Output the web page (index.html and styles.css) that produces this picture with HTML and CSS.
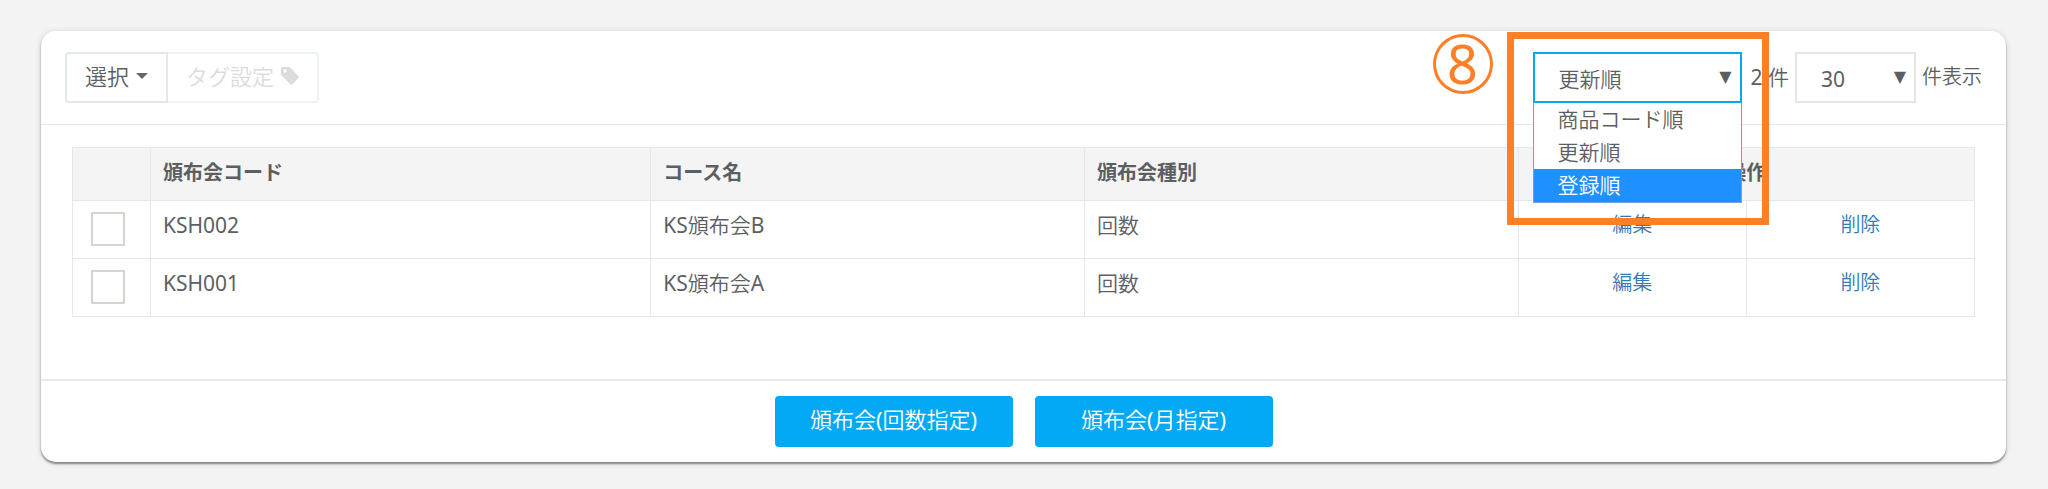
FILE: index.html
```html
<!DOCTYPE html>
<html lang="ja">
<head>
    <meta charset="UTF-8">
    <meta name="viewport" content="width=device-width, initial-scale=1.0">
    <title>頒布会一覧</title>
    <link rel="stylesheet" href="styles.css">
</head>
<body>

    <main class="card">
        <div class="toolbar">
            <div class="btn-group">
                <button type="button" class="btn">選択 <span class="caret"></span></button>
                <button type="button" class="btn" disabled>タグ設定
                    <svg class="tag" viewBox="0 0 18 18" aria-hidden="true">
                        <path fill="currentColor" fill-rule="evenodd" d="M0 1.5Q0 0 1.5 0H7.5Q8.7 0 9.6 .9L17.4 8.9Q18.4 10 17.4 11.1L11.6 17.2Q10.6 18.3 9.4 17.2L.9 9Q0 8.1 0 7ZM4 2.3A1.7 1.7 0 1 0 4 5.7A1.7 1.7 0 1 0 4 2.3Z"/>
                    </svg>
                </button>
            </div>
            <div class="filters">
                <div class="sort">
                    <div class="select sort-select">
                        <select aria-label="並び順">
                            <option>商品コード順</option>
                            <option selected>更新順</option>
                            <option>登録順</option>
                        </select>
                    </div>
                    <ul class="menu">
                        <li>商品コード順</li>
                        <li>更新順</li>
                        <li class="active">登録順</li>
                    </ul>
                    <div class="highlight"></div>
                    <div class="number">8</div>
                </div>
                <span class="count">2 件</span>
                <div class="select">
                    <select id="limit">
                        <option>30</option>
                        <option>50</option>
                        <option>100</option>
                    </select>
                </div>
                <label for="limit">件表示</label>
            </div>
        </div>

        <div class="content">
            <table>
                <colgroup>
                    <col class="col-check">
                    <col class="col-code">
                    <col class="col-name">
                    <col class="col-name">
                    <col class="col-action">
                    <col class="col-action">
                </colgroup>
                <thead>
                    <tr>
                        <th></th>
                        <th>頒布会コード</th>
                        <th>コース名</th>
                        <th>頒布会種別</th>
                        <th colspan="2" class="center">操作</th>
                    </tr>
                </thead>
                <tbody>
                    <tr>
                        <td class="center"><input type="checkbox" aria-label="KSH002"></td>
                        <td>KSH002</td>
                        <td>KS頒布会B</td>
                        <td>回数</td>
                        <td class="center"><a href="#">編集</a></td>
                        <td class="center"><a href="#">削除</a></td>
                    </tr>
                    <tr>
                        <td class="center"><input type="checkbox" aria-label="KSH001"></td>
                        <td>KSH001</td>
                        <td>KS頒布会A</td>
                        <td>回数</td>
                        <td class="center"><a href="#">編集</a></td>
                        <td class="center"><a href="#">削除</a></td>
                    </tr>
                </tbody>
            </table>
        </div>

        <div class="footer">
            <button type="button" class="btn-primary">頒布会(回数指定)</button>
            <button type="button" class="btn-primary">頒布会(月指定)</button>
        </div>
    </main>

</body>
</html>
```
FILE: styles.css
```css
* {
    box-sizing: border-box;
}
body {
    margin: 0;
    padding: 31px 42px 27px 41px;
    background: #f3f3f3;
    color: #5c5f62;
    font-family: "Noto Sans", "Noto Sans CJK JP DemiLight", "Noto Sans CJK JP", sans-serif;
    font-size: 20px;
    line-height: 28px;
}
button, select {
    font: inherit;
    color: inherit;
}
.card {
    background: #fff;
    border-radius: 15px;
    box-shadow: 0 2px 2px rgba(0, 0, 0, 0.4), 0 1px 6px rgba(0, 0, 0, 0.15);
}

/* toolbar */
.toolbar {
    display: flex;
    justify-content: space-between;
    padding: 21px 24px;
    border-bottom: 1px solid #e3e7ea;
}
.btn-group {
    display: flex;
}
.btn {
    display: flex;
    align-items: center;
    gap: 7px;
    padding: 8px 18px 11px;
    border: 2px solid #e3e8eb;
    background: #fff;
    font-size: 22px;
}
.btn:first-child {
    border-radius: 4px 0 0 4px;
}
.btn:last-child {
    border-left: 0;
    border-radius: 0 4px 4px 0;
}
.btn:disabled {
    border-color: #eff2f3;
    color: #dcdcdc;
}
.caret {
    border: 6px solid transparent;
    border-top-color: #636669;
    border-bottom: 0;
}
.tag {
    width: 18px;
    height: 18px;
}
.filters {
    display: flex;
    align-items: center;
    gap: 6px;
}
.count {
    padding-left: 3px;
    font-size: 21px;
}
.count, .filters label {
    padding-bottom: 2px;
}
.select {
    position: relative;
    width: 121px;
}
.select::after {
    content: "▼";
    position: absolute;
    top: 11px;
    right: 10px;
    font-family: "DejaVu Sans", sans-serif;
    font-size: 16px;
    pointer-events: none;
}
.select select {
    display: block;
    width: 100%;
    height: 51px;
    padding: 2px 24px 0;
    border: 2px solid #e5e5e5;
    border-radius: 0;
    background: #fff;
    font-size: 21px;
    appearance: none;
}
.sort {
    position: relative;
}
.sort-select {
    width: 209px;
}
.sort-select select {
    border-color: #03a9f4;
}
.menu {
    position: absolute;
    top: 100%;
    left: 0;
    width: 100%;
    margin: 0;
    padding: 0;
    border: 1px solid #7a9cdd;
    border-top: 0;
    background: #fff;
    font-size: 21px;
    line-height: 33px;
    list-style: none;
}
.menu li {
    padding-left: 24px;
}
.menu .active {
    background: #1e90ff;
    color: #fff;
}
.highlight {
    position: absolute;
    top: -20px;
    left: -26px;
    width: 262px;
    height: 193px;
    border: 7px solid #ff7f27;
    pointer-events: none;
}
.number {
    position: absolute;
    top: -18px;
    left: -100px;
    width: 60px;
    height: 60px;
    border: 3px solid #ff7f27;
    border-radius: 50%;
    color: #ff7f27;
    font-size: 54px;
    line-height: 52px;
    text-align: center;
}

/* table */
.content {
    padding: 22px 31px 62px;
}
table {
    width: 100%;
    border-collapse: collapse;
    table-layout: fixed;
}
.col-check {
    width: 78px;
}
.col-name {
    width: 22.8%;
}
.col-action {
    width: 12%;
}
th, td {
    padding: 10px 12px 12px;
    border: 1px solid #e7e7e7;
    text-align: left;
    vertical-align: top;
}
th {
    padding-bottom: 14px;
    background: #f4f4f4;
    font-family: "Noto Sans CJK JP", sans-serif;
    font-weight: 700;
}
td {
    font-size: 21px;
}
th.center, td.center {
    font-size: 20px;
    text-align: center;
}
a {
    color: #337ab7;
    text-decoration: none;
}
input[type="checkbox"] {
    display: block;
    width: 34px;
    height: 34px;
    margin: 1px 0 0 6px;
    border: 2px solid #d8d3cc;
    background: #fff;
    appearance: none;
}

/* footer */
.footer {
    display: flex;
    justify-content: center;
    gap: 22px;
    padding: 15px;
    border-top: 2px solid #e5eaee;
}
.btn-primary {
    width: 238px;
    padding: 9px 0 14px;
    border: 0;
    border-radius: 4px;
    background: #03a9f4;
    color: #fff;
    font-size: 22px;
}
```
